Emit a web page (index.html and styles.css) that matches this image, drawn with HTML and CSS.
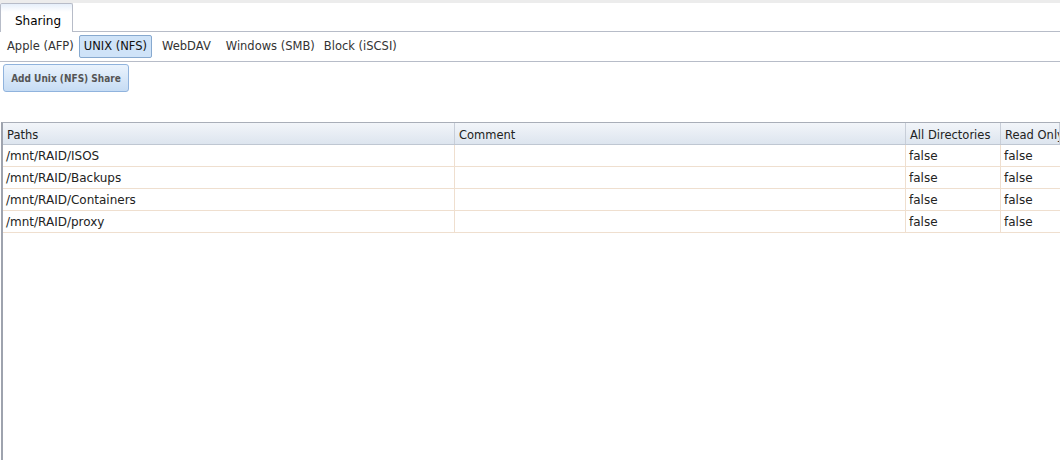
FILE: index.html
```html
<!DOCTYPE html>
<html>
<head>
<meta charset="utf-8">
<link rel="stylesheet" href="styles.css">
</head>
<body>
<div class="app">
  <div class="topstrip"></div>
  <div class="tabbar">
    <div class="tab active">Sharing</div>
    <div class="tabfill"></div>
  </div>
  <div class="subtabs">
    <span class="subtab afp">Apple (AFP)</span>
    <span class="subtab nfs selected">UNIX (NFS)</span>
    <span class="subtab dav">WebDAV</span>
    <span class="subtab smb">Windows (SMB)</span>
    <span class="subtab iscsi">Block (iSCSI)</span>
  </div>
  <div class="toolbar">
    <button class="addbtn">Add Unix (NFS) Share</button>
  </div>
  <div class="grid">
    <div class="row head">
      <div class="cell c1">Paths</div>
      <div class="cell c2">Comment</div>
      <div class="cell c3">All Directories</div>
      <div class="cell c4">Read Only</div>
    </div>
    <div class="row">
      <div class="cell c1">/mnt/RAID/ISOS</div>
      <div class="cell c2"></div>
      <div class="cell c3">false</div>
      <div class="cell c4">false</div>
    </div>
    <div class="row">
      <div class="cell c1">/mnt/RAID/Backups</div>
      <div class="cell c2"></div>
      <div class="cell c3">false</div>
      <div class="cell c4">false</div>
    </div>
    <div class="row">
      <div class="cell c1">/mnt/RAID/Containers</div>
      <div class="cell c2"></div>
      <div class="cell c3">false</div>
      <div class="cell c4">false</div>
    </div>
    <div class="row">
      <div class="cell c1">/mnt/RAID/proxy</div>
      <div class="cell c2"></div>
      <div class="cell c3">false</div>
      <div class="cell c4">false</div>
    </div>
  </div>
</div>
</body>
</html>
```
FILE: styles.css
```css
html, body {
  margin: 0;
  padding: 0;
  background: #fff;
  overflow: hidden;
}
.app {
  width: 1060px;
  height: 460px;
  display: flex;
  flex-direction: column;
  font-family: "DejaVu Sans", Verdana, sans-serif;
  color: #222;
}
.topstrip {
  height: 3px;
  background: #ececec;
}
.tabbar {
  display: flex;
  height: 29px;
}
.tab {
  width: 73px;
  box-sizing: border-box;
  border: 1px solid #b7bcc8;
  border-bottom: none;
  border-radius: 2px 2px 0 0;
  background: linear-gradient(#e6effa, #fff 8px);
  font-size: 12px;
  padding: 10px 0 0 14px;
  color: #000;
}
.tabfill {
  flex: 1;
  border-bottom: 1px solid #b7bcc8;
}
.subtabs {
  display: flex;
  align-items: center;
  height: 29px;
  padding-left: 2px;
  border-bottom: 1px solid #b7bcc8;
  font-size: 11.5px;
  color: #333;
}
.subtab {
  padding: 3px 4px 4px;
  border: 1px solid transparent;
  border-radius: 2px;
  margin-left: 5px;
}
.subtab.afp { margin-left: 0; }
.subtab.nfs { margin-left: 0; }
.subtab.iscsi { margin-left: -1px; }
.subtab.selected {
  background: #cfe3f8;
  border-color: #87a9cf;
  color: #111;
}
.toolbar {
  height: 60px;
  padding: 2px 0 0 3px;
  box-sizing: border-box;
}
.addbtn {
  width: 126px;
  height: 28px;
  border: 1px solid #90b3dd;
  border-radius: 3px;
  background: linear-gradient(#eaf3fd, #c6dcf4);
  font-family: "DejaVu Sans Condensed", "DejaVu Sans", sans-serif;
  font-stretch: condensed;
  font-weight: bold;
  font-size: 10px;
  color: #555;
  padding: 0;
}
.grid {
  flex: 1;
  border-left: 2px solid #9ea3ae;
  border-top: 1px solid #a9aeb8;
  margin-left: 1px;
}
.row {
  display: flex;
  height: 22px;
  box-sizing: border-box;
  border-bottom: 1px solid #efdfcf;
  font-size: 12px;
}
.row.head {
  height: 22px;
  background: linear-gradient(#f2f5f9, #dde5ef);
  border-bottom: 1px solid #bfc7d2;
  font-size: 11.5px;
  color: #222;
}
.cell {
  box-sizing: border-box;
  padding: 4px 0 0 3px;
  border-right: 1px solid #efdfcf;
  white-space: nowrap;
  overflow: hidden;
}
.row.head .cell {
  border-right: 1px solid #c8ced8;
  padding-top: 5px;
  padding-left: 4px;
}
.c1 { width: 452px; }
.c2 { width: 451px; }
.c3 { width: 95px; }
.c4 { flex: 1; border-right: none; }
```
